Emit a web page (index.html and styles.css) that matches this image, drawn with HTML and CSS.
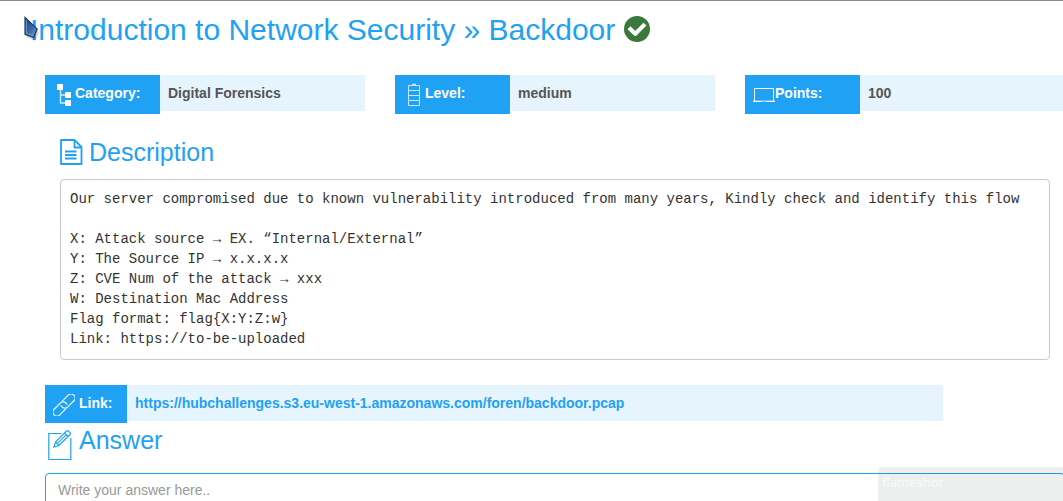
FILE: index.html
```html
<!DOCTYPE html>
<html lang="en">
<head>
<meta charset="utf-8">
<title>Backdoor</title>
<link rel="stylesheet" href="styles.css">
</head>
<body>
<svg class="cursor" width="16" height="26" viewBox="0 0 16 26" aria-hidden="true">
  <defs><linearGradient id="steel" x1="0" y1="0" x2="1" y2="1"><stop offset="0" stop-color="#153a70"/><stop offset="0.6" stop-color="#3f6fae"/><stop offset="1" stop-color="#86a9d2"/></linearGradient></defs>
  <path d="M2 4v17l9 4 4-8z" fill="#000" opacity=".15"/>
  <path d="M1 1.5v16.8l8.6 3.2 3.6-8.4z" fill="url(#steel)" stroke="#17386b" stroke-width="1.2"/>
  <path d="M2.3 4v13.2l6.6 2.5" fill="none" stroke="#7d9fc9" stroke-width="1"/>
</svg>
<header class="title-bar">
  <h1 class="title">Introduction to Network Security » Backdoor</h1>
  <svg class="solved" width="26" height="26" viewBox="0 0 26 26" role="img" aria-label="Solved"><circle cx="13" cy="13" r="13" fill="#3b783c"/><path d="M6.500 13.200l4.800 4.600 8.200-8.200" fill="none" stroke="#fff" stroke-width="4.200" stroke-linejoin="round" stroke-linecap="square"/></svg>
</header>
<main class="content">
  <dl class="facts">
    <div class="fact">
      <dt class="label"><svg class="label-icon" width="22" height="24" viewBox="0 0 22 24" aria-hidden="true"><path d="M4 1h6v6H4zM12 9h6v6h-6zM12 17h6v6h-6z" fill="#fff"/><path d="M7.500 7v13H12M7.500 12H12" fill="none" stroke="#d3ecfd" stroke-width="1.4"/></svg>Category:</dt>
      <dd class="value">Digital Forensics</dd>
    </div>
    <div class="fact">
      <dt class="label"><svg class="label-icon" width="22" height="24" viewBox="0 0 22 24" aria-hidden="true"><g fill="none" stroke="#c8e7fd"><path d="M5.500 2.500h11v20h-11zM5.500 7.500h11M5.500 12.500h11M5.500 17.500h11"/><path d="M9 1.500h4" stroke-width="1.500"/></g></svg>Level:</dt>
      <dd class="value">medium</dd>
    </div>
    <div class="fact">
      <dt class="label"><svg class="label-icon" width="22" height="24" viewBox="0 0 22 24" aria-hidden="true"><path d="M1.500 18V5.500h19V18" fill="none" stroke="#fff"/><path d="M0 17.700h22v1.300H0z" fill="#fff"/><path d="M9 18h4v1H9z" fill="#8accfa"/></svg>Points:</dt>
      <dd class="value">100</dd>
    </div>
  </dl>
  <section class="description">
    <h2 class="heading"><svg class="heading-icon" width="23" height="26" viewBox="0 0 23 26" aria-hidden="true"><g fill="none" stroke="#1fa1f4" stroke-width="1.800" stroke-linejoin="round"><path d="M1 1h13.500l7 7v17H1z"/><path d="M14.500 1v7.500h7M5 12.500h11.500M5 16h11.500M5 19.500h11.500"/></g></svg>Description</h2>
    <pre class="brief">Our server compromised due to known vulnerability introduced from many years, Kindly check and identify this flow

X: Attack source → EX. “Internal/External”
Y: The Source IP → x.x.x.x
Z: CVE Num of the attack → xxx
W: Destination Mac Address
Flag format: flag{X:Y:Z:w}
Link: https://to-be-uploaded</pre>
  </section>
  <div class="download">
    <span class="label link-label"><svg class="label-icon" width="22" height="22" viewBox="0 0 22 22" aria-hidden="true"><g transform="rotate(-45 11 11)" fill="none" stroke="#e5f4fe" stroke-width="1.300" stroke-linecap="round"><path d="M9.500 15H1A4 4 0 0 1 1 7H10A4 4 0 0 1 13.500 12.500"/><path d="M12.500 7H21A4 4 0 0 1 21 15H12A4 4 0 0 1 8.500 9.500"/></g></svg><span class="link-text">Link:</span></span>
    <a class="value link-value" href="https://hubchallenges.s3.eu-west-1.amazonaws.com/foren/backdoor.pcap">https://hubchallenges.s3.eu-west-1.amazonaws.com/foren/backdoor.pcap</a>
  </div>
  <section class="answer">
    <h2 class="answer-heading"><svg class="answer-icon" width="25" height="31" viewBox="0 0 25 31" aria-hidden="true"><g fill="none" stroke="#1fa1f4" stroke-width="1.200"><path d="M13.500 3.500H.8v26h22V8"/><path d="M6 17l1.500-5L18.500 1q1-.7 2 .2l1.500 1.500q.8 1 0 1.800L11 15.500zM7.500 12l3.500 3.500M16.500 3l3.500 3.500M9.300 13.700l9-9"/></g></svg><label for="answer">Answer</label></h2>
    <textarea class="answer-box" id="answer" rows="1" placeholder="Write your answer here.."></textarea>
  </section>
</main>
<div class="toast">flameshot</div>
</body>
</html>
```
FILE: styles.css
```css
* {
  box-sizing: border-box;
}

body {
  margin: 0;
  height: 100vh;
  overflow: hidden;
  border-top: 1px solid #8c8c8c;
  background: #fff;
  color: #333;
  font: 14px/20px "Liberation Sans", Arial, sans-serif;
}

.cursor {
  position: absolute;
  left: 24px;
  top: 16px;
  z-index: 2;
}

.title-bar {
  display: flex;
  align-items: center;
  gap: 9px;
  padding: 12px 0 0 30px;
}

.title {
  margin: 0;
  font-size: 30px;
  font-weight: 400;
  line-height: 33px;
  color: #1fa1f4;
  white-space: nowrap;
}

.solved {
  flex: none;
  margin-bottom: 2px;
}

.content {
  margin-right: -2px;
  padding: 29px 0 0 45px;
}

.facts {
  display: grid;
  grid-template-columns: repeat(3, 1fr);
  gap: 30px;
  margin: 0;
}

.fact,
.download {
  display: flex;
  align-items: flex-start;
  font-weight: 700;
}

.label {
  display: flex;
  flex: none;
  align-items: center;
  width: 115px;
  height: 39px;
  padding: 0 8px 3px;
  background: #1fa1f4;
  color: #fff;
}

.label-icon {
  flex: none;
  margin-top: 4px;
}

.value {
  flex: 1;
  margin: 0;
  padding: 8px;
  background: #e6f4fe;
  color: #555;
}

.description {
  padding: 22px 15px 0;
}

.heading,
.answer-heading {
  display: flex;
  align-items: center;
  margin: 0;
  font-size: 25px;
  font-weight: 400;
  line-height: 32px;
  color: #1fa1f4;
}

.heading {
  gap: 6px;
}

.brief {
  margin: 11px 0 25px;
  padding: 9px 9px 10px;
  border: 1px solid #ccc;
  border-radius: 4px;
  font: 14px/20px "Liberation Mono", "Courier New", monospace;
}

.download {
  width: 88%;
}

.link-label {
  width: 82px;
  height: 38px;
  padding-bottom: 2px;
}

.link-text {
  padding-left: 4px;
}

.link-value {
  color: #1fa1f4;
  text-decoration: none;
}

.answer-heading {
  align-items: flex-start;
  gap: 6px;
  padding: 1px 0 0 3px;
}

.answer-icon {
  margin-top: 6px;
}

.answer-box {
  display: block;
  width: 100%;
  margin-top: 12px;
  padding: 6px 12px;
  border: 1px solid #1fa1f4;
  border-radius: 4px;
  font: inherit;
  color: #555;
  resize: none;
}

.answer-box::placeholder {
  color: #999;
}

.toast {
  position: absolute;
  right: 0;
  bottom: 0;
  width: 185px;
  height: 34px;
  padding: 5px 4px;
  border-radius: 5px 0 0;
  background: rgba(60, 80, 75, 0.09);
  color: #f9faf9;
  font: 13px/20px "Noto Sans", sans-serif;
}
```
